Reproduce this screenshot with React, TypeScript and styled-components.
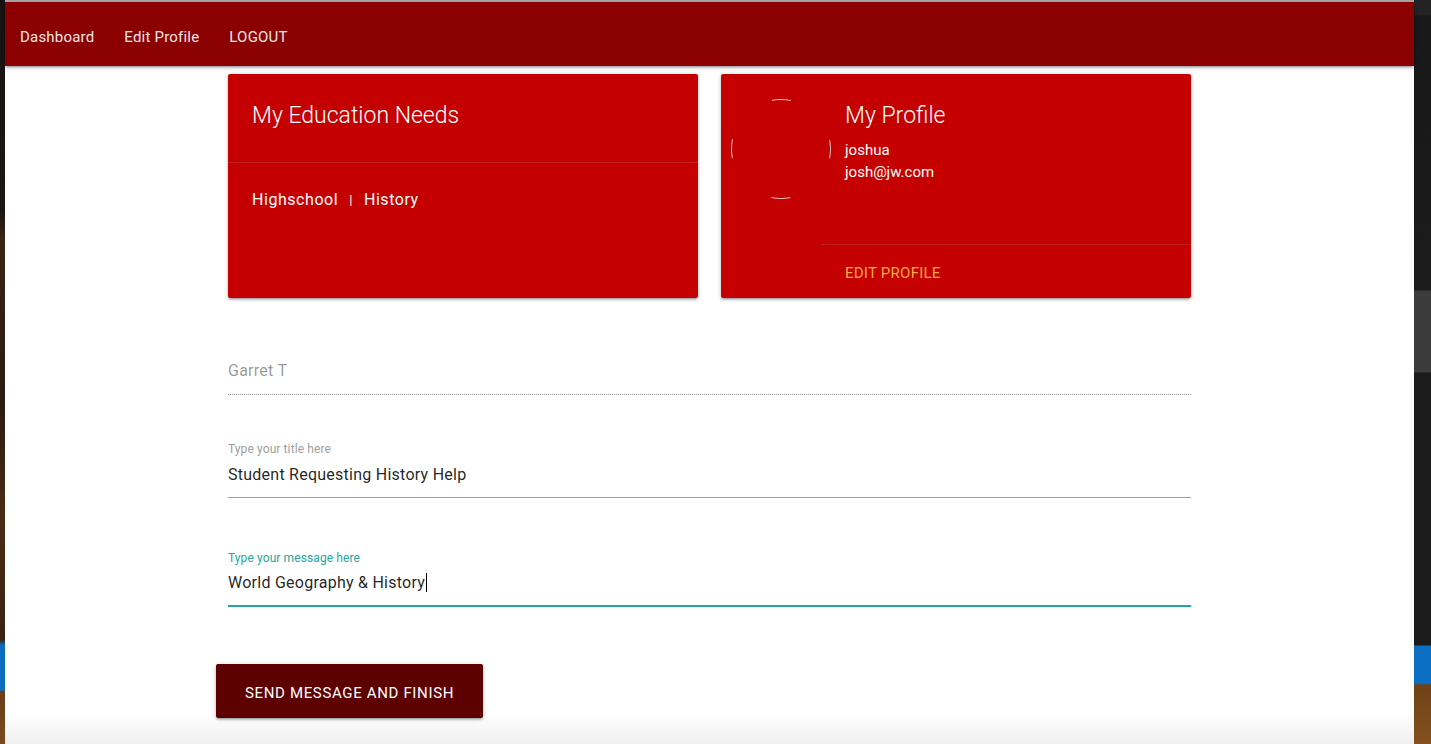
import React from "react";
import styled, { createGlobalStyle } from "styled-components";

const Global = createGlobalStyle`
  html, body { margin: 0; padding: 0; background: #1b1b1b; }
  body { font-family: Roboto, "Liberation Sans", Arial, sans-serif; overflow: hidden; }
  * { box-sizing: border-box; }
`;

const Screen = styled.div`
  display: flex;
  width: 1431px;
  height: 744px;
`;

const LeftStrip = styled.div`
  width: 5px;
  flex-shrink: 0;
  background: linear-gradient(
    to bottom,
    #161312 0px,
    #1a1614 210px,
    #3a2414 240px,
    #2b1b10 400px,
    #4a2c14 520px,
    #3a2212 640px,
    #0b6cc0 645px,
    #0b6cc0 690px,
    #6a3e18 692px,
    #7a4a1e 744px
  );
`;

const RightStrip = styled.div`
  width: 17px;
  flex-shrink: 0;
  background: linear-gradient(
    to bottom,
    #232323 0px,
    #232323 15px,
    #181818 16px,
    #1b1b1b 290px,
    #3b3b3b 291px,
    #3b3b3b 372px,
    #1b1b1b 373px,
    #1b1b1b 645px,
    #0a6fc2 646px,
    #0a6fc2 683px,
    #6e4216 685px,
    #84511f 744px
  );
`;

const Window = styled.div`
  width: 1409px;
  flex-shrink: 0;
  height: 744px;
  border-top: 2px solid #a9a9a9;
  background: linear-gradient(to bottom, #ffffff 0, #ffffff 712px, #efefef 744px);
  display: flex;
  flex-direction: column;
`;

const NavBar = styled.nav`
  height: 64px;
  flex-shrink: 0;
  background: #8b0000;
  display: flex;
  align-items: center;
  padding-top: 6px;
  box-shadow: 0 2px 2px 0 rgba(0, 0, 0, 0.14), 0 3px 1px -2px rgba(0, 0, 0, 0.12),
    0 1px 5px 0 rgba(0, 0, 0, 0.2);
  position: relative;
  z-index: 1;
`;

const NavLink = styled.a`
  color: #f0e6e6;
  font-size: 15px;
  letter-spacing: 0.2px;
  padding: 0 15px;
  text-decoration: none;
`;

const Container = styled.main`
  width: 963px;
  margin: 0 auto;
  display: flex;
  flex-direction: column;
`;

const CardRow = styled.div`
  display: grid;
  grid-template-columns: 470px 470px;
  column-gap: 23px;
  margin-top: 8px;
`;

const Card = styled.section<{ $horizontal?: boolean }>`
  height: 224px;
  background: #c40000;
  border-radius: 2px;
  color: #fff;
  display: flex;
  flex-direction: ${(p) => (p.$horizontal ? "row" : "column")};
  box-shadow: 0 2px 2px 0 rgba(0, 0, 0, 0.14), 0 3px 1px -2px rgba(0, 0, 0, 0.12),
    0 1px 5px 0 rgba(0, 0, 0, 0.2);
`;

const CardHead = styled.div`
  padding: 26px 24px 30px;
  border-bottom: 1px solid rgba(160, 160, 160, 0.2);
`;

const CardTitle = styled.h2`
  margin: 0;
  font-size: 23px;
  font-weight: 300;
  line-height: 32px;
`;

const CardBody = styled.div`
  padding: 25px 24px;
  font-size: 16px;
  letter-spacing: 0.55px;
  line-height: 24px;
  display: flex;
  align-items: center;
`;

const Sep = styled.span`
  font-size: 13px;
  margin: 0 11px 0 11px;
`;

const ImageCol = styled.div`
  width: 100px;
  flex-shrink: 0;
  padding-top: 25px;
  overflow: visible;
`;

const Avatar = styled.svg`
  display: block;
  margin-left: 10px;
  overflow: visible;
`;

const Stacked = styled.div`
  flex: 1;
  display: flex;
  flex-direction: column;
`;

const ProfileContent = styled.div`
  flex: 1;
  padding: 26px 24px 0;
  border-bottom: 1px solid rgba(160, 160, 160, 0.2);
`;

const InfoLine = styled.div<{ $first?: boolean }>`
  font-size: 15px;
  line-height: 22px;
  margin-top: ${(p) => (p.$first ? "7px" : "0")};
`;

const CardAction = styled.div`
  height: 53px;
  padding: 0 24px;
  display: flex;
  align-items: center;
`;

const ActionLink = styled.a`
  color: #ffab40;
  font-size: 15px;
  letter-spacing: 0.25px;
  text-transform: uppercase;
  text-decoration: none;
  margin-top: 2px;
`;

const Field = styled.div<{ $mt: number }>`
  margin-top: ${(p) => p.$mt}px;
  display: flex;
  flex-direction: column;
`;

const Label = styled.label<{ $active?: boolean }>`
  font-size: 12px;
  line-height: 12px;
  height: 12px;
  letter-spacing: 0.1px;
  color: ${(p) => (p.$active ? "#26a69a" : "#9e9e9e")};
`;

const InputBox = styled.div<{ $variant: "disabled" | "normal" | "focus"; $h: number; $pb?: number }>`
  height: ${(p) => p.$h}px;
  padding-bottom: ${(p) => p.$pb ?? 0}px;
  display: flex;
  align-items: center;
  font-size: 16px;
  letter-spacing: 0.25px;
  color: ${(p) => (p.$variant === "disabled" ? "rgba(0,0,0,0.42)" : "rgba(0,0,0,0.87)")};
  border-bottom: ${(p) =>
    p.$variant === "disabled"
      ? "1px dotted rgba(0,0,0,0.42)"
      : p.$variant === "focus"
      ? "2px solid #26a69a"
      : "1px solid #9e9e9e"};
`;

const Caret = styled.span`
  display: inline-block;
  width: 1px;
  height: 19px;
  background: #000;
  margin-left: 1px;
`;

const Button = styled.button`
  align-self: flex-start;
  margin: 57px 0 0 -12px;
  height: 54px;
  padding: 3px 29px 0 29px;
  background: #5c0000;
  color: #fff;
  border: none;
  border-radius: 2px;
  font-family: inherit;
  font-size: 15px;
  letter-spacing: 0.65px;
  text-transform: uppercase;
  box-shadow: 0 2px 2px 0 rgba(0, 0, 0, 0.14), 0 3px 1px -2px rgba(0, 0, 0, 0.12),
    0 1px 5px 0 rgba(0, 0, 0, 0.2);
`;

const C = 2 * Math.PI * 49.5;

export default function App() {
  return (
    <>
      <Global />
      <Screen>
        <LeftStrip />
        <Window>
          <NavBar>
            <NavLink>Dashboard</NavLink>
            <NavLink>Edit Profile</NavLink>
            <NavLink>LOGOUT</NavLink>
          </NavBar>
          <Container>
            <CardRow>
              <Card>
                <CardHead>
                  <CardTitle>My Education Needs</CardTitle>
                </CardHead>
                <CardBody>
                  Highschool<Sep>|</Sep>History
                </CardBody>
              </Card>
              <Card $horizontal>
                <ImageCol>
                  <Avatar width="100" height="100" viewBox="0 0 100 100">
                    <circle
                      cx="50"
                      cy="50"
                      r="49.5"
                      fill="none"
                      stroke="rgba(255,255,255,0.75)"
                      strokeWidth="1"
                      strokeDasharray={`19 ${C / 4 - 19}`}
                      strokeDashoffset="9.5"
                    />
                  </Avatar>
                </ImageCol>
                <Stacked>
                  <ProfileContent>
                    <CardTitle>My Profile</CardTitle>
                    <InfoLine $first>joshua</InfoLine>
                    <InfoLine>josh@jw.com</InfoLine>
                  </ProfileContent>
                  <CardAction>
                    <ActionLink>Edit Profile</ActionLink>
                  </CardAction>
                </Stacked>
              </Card>
            </CardRow>

            <Field $mt={49}>
              <InputBox $variant="disabled" $h={48} $pb={0}>
                Garret T
              </InputBox>
            </Field>

            <Field $mt={48}>
              <Label>Type your title here</Label>
              <InputBox $variant="normal" $h={43} $pb={4}>
                Student Requesting History Help
              </InputBox>
            </Field>

            <Field $mt={54}>
              <Label $active>Type your message here</Label>
              <InputBox $variant="focus" $h={43} $pb={4}>
                World Geography &amp; History
                <Caret />
              </InputBox>
            </Field>

            <Button>Send Message and Finish</Button>
          </Container>
        </Window>
        <RightStrip />
      </Screen>
    </>
  );
}
